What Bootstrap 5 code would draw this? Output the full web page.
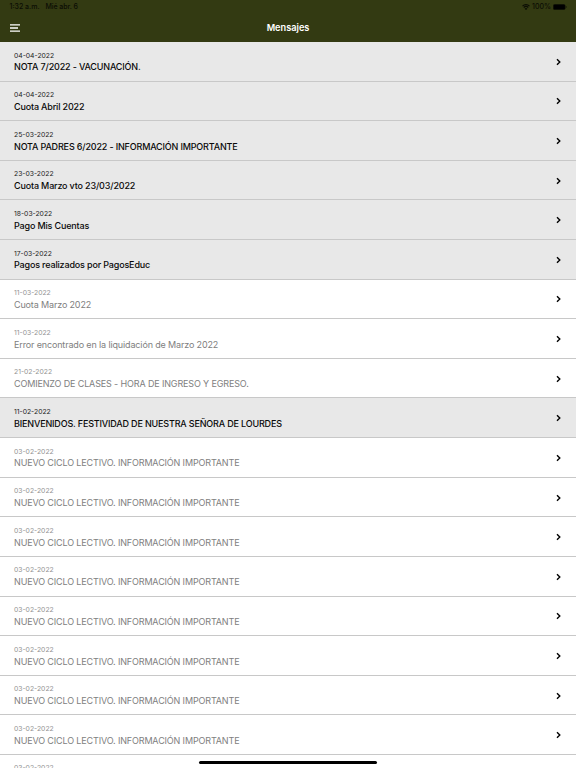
<!DOCTYPE html>
<html lang="es">
<head>
<meta charset="utf-8">
<meta name="viewport" content="width=device-width, initial-scale=1">
<title>Mensajes</title>
<link href="https://cdn.jsdelivr.net/npm/bootstrap@5.3.0/dist/css/bootstrap.min.css" rel="stylesheet">
<style>
body{font-family:Inter,"Liberation Sans",sans-serif;height:768px;background:#fff;color:#000}
.topbar{background:#333a12;height:42px}
.status{height:14px;padding:0 9px 0 9.5px;font-size:7px;line-height:14px;font-weight:500;color:#0b0d04}
.status .clock{gap:6px}
.status .day{letter-spacing:-.08px}
.status .power{gap:2px}
.titlebar{height:28px;padding:0 10px}
.titlebar h1{font-size:9.2px;line-height:28px;font-weight:600;color:#fff}
.side{width:40px}
.msg{height:39.62px;padding:0 14px;border:0;border-bottom:1px solid #c8c8c8;border-radius:0;color:#808080;background:#fff}
.msg.unread{background:#e8e8e8;color:#0a0a0a}
.msg time{font-size:6.8px;line-height:10px;margin-top:8.5px;color:#939393}
.msg.unread time{color:#1c1c1c}
.msg .subject{font-size:9px;line-height:12px;margin-top:.9px;letter-spacing:-.14px}
.msg.unread .subject{font-weight:500;letter-spacing:-.165px}
.chev{width:7px;height:8px;margin-top:1px;stroke:#000;fill:none;stroke-width:1.4}
.home{left:199px;bottom:4.5px;width:178px;height:3px;border-radius:2px;background:#000}
</style>
<script src="https://cdn.jsdelivr.net/npm/bootstrap@5.3.0/dist/js/bootstrap.bundle.min.js"></script>
</head>
<body class="overflow-hidden position-relative">
<svg class="d-none"><symbol id="chevron" viewBox="0 0 7 8"><path d="M2 1.2 4.8 4 2 6.8"/></symbol></svg>
<header class="topbar">
  <div class="status d-flex justify-content-between">
    <div class="d-flex clock"><span>1:32 a.m.</span><span class="day">Mié abr. 6</span></div>
    <div class="d-flex align-items-center power">
      <svg width="8" height="6" viewBox="0 0 16 12" fill="none" stroke="#0b0d04" stroke-width="2.4"><path d="M1 4.2a10 10 0 0 1 14 0M3.5 7a6.4 6.4 0 0 1 9 0"/><path d="M8 12 5.2 9.3a4 4 0 0 1 5.6 0z" fill="#0b0d04" stroke="none"/></svg>
      <span>100%</span>
      <svg width="14" height="6" viewBox="0 0 14 6"><rect x=".25" y=".25" width="12" height="5.5" rx="1.6" fill="#000" stroke="#1a1e0a" stroke-width=".5"/><path d="M12.9 2v2q.7-.3.7-1t-.7-1" fill="#0b0d04"/></svg>
    </div>
  </div>
  <div class="titlebar d-flex align-items-center justify-content-between">
    <div class="side d-flex"><svg width="10" height="8" viewBox="0 0 10 8" stroke="#fff" stroke-width="1.3"><path d="M0 .9h10M0 4h8M0 7.1h10"/></svg></div>
    <h1 class="m-0">Mensajes</h1>
    <div class="side"></div>
  </div>
</header>
<main class="list-group rounded-0">
  <div class="list-group-item msg unread d-flex align-items-center justify-content-between"><div class="d-flex flex-column h-100"><time>04-04-2022</time><span class="subject">NOTA 7/2022 - VACUNACIÓN.</span></div><svg class="chev"><use href="#chevron"/></svg></div>
  <div class="list-group-item msg unread d-flex align-items-center justify-content-between"><div class="d-flex flex-column h-100"><time>04-04-2022</time><span class="subject">Cuota Abril 2022</span></div><svg class="chev"><use href="#chevron"/></svg></div>
  <div class="list-group-item msg unread d-flex align-items-center justify-content-between"><div class="d-flex flex-column h-100"><time>25-03-2022</time><span class="subject">NOTA PADRES 6/2022 - INFORMACIÓN IMPORTANTE</span></div><svg class="chev"><use href="#chevron"/></svg></div>
  <div class="list-group-item msg unread d-flex align-items-center justify-content-between"><div class="d-flex flex-column h-100"><time>23-03-2022</time><span class="subject">Cuota Marzo vto 23/03/2022</span></div><svg class="chev"><use href="#chevron"/></svg></div>
  <div class="list-group-item msg unread d-flex align-items-center justify-content-between"><div class="d-flex flex-column h-100"><time>18-03-2022</time><span class="subject">Pago Mis Cuentas</span></div><svg class="chev"><use href="#chevron"/></svg></div>
  <div class="list-group-item msg unread d-flex align-items-center justify-content-between"><div class="d-flex flex-column h-100"><time>17-03-2022</time><span class="subject">Pagos realizados por PagosEduc</span></div><svg class="chev"><use href="#chevron"/></svg></div>
  <div class="list-group-item msg d-flex align-items-center justify-content-between"><div class="d-flex flex-column h-100"><time>11-03-2022</time><span class="subject">Cuota Marzo 2022</span></div><svg class="chev"><use href="#chevron"/></svg></div>
  <div class="list-group-item msg d-flex align-items-center justify-content-between"><div class="d-flex flex-column h-100"><time>11-03-2022</time><span class="subject">Error encontrado en la liquidación de Marzo 2022</span></div><svg class="chev"><use href="#chevron"/></svg></div>
  <div class="list-group-item msg d-flex align-items-center justify-content-between"><div class="d-flex flex-column h-100"><time>21-02-2022</time><span class="subject">COMIENZO DE CLASES - HORA DE INGRESO Y EGRESO.</span></div><svg class="chev"><use href="#chevron"/></svg></div>
  <div class="list-group-item msg unread d-flex align-items-center justify-content-between"><div class="d-flex flex-column h-100"><time>11-02-2022</time><span class="subject">BIENVENIDOS. FESTIVIDAD DE NUESTRA SEÑORA DE LOURDES</span></div><svg class="chev"><use href="#chevron"/></svg></div>
  <div class="list-group-item msg d-flex align-items-center justify-content-between"><div class="d-flex flex-column h-100"><time>03-02-2022</time><span class="subject">NUEVO CICLO LECTIVO. INFORMACIÓN IMPORTANTE</span></div><svg class="chev"><use href="#chevron"/></svg></div>
  <div class="list-group-item msg d-flex align-items-center justify-content-between"><div class="d-flex flex-column h-100"><time>03-02-2022</time><span class="subject">NUEVO CICLO LECTIVO. INFORMACIÓN IMPORTANTE</span></div><svg class="chev"><use href="#chevron"/></svg></div>
  <div class="list-group-item msg d-flex align-items-center justify-content-between"><div class="d-flex flex-column h-100"><time>03-02-2022</time><span class="subject">NUEVO CICLO LECTIVO. INFORMACIÓN IMPORTANTE</span></div><svg class="chev"><use href="#chevron"/></svg></div>
  <div class="list-group-item msg d-flex align-items-center justify-content-between"><div class="d-flex flex-column h-100"><time>03-02-2022</time><span class="subject">NUEVO CICLO LECTIVO. INFORMACIÓN IMPORTANTE</span></div><svg class="chev"><use href="#chevron"/></svg></div>
  <div class="list-group-item msg d-flex align-items-center justify-content-between"><div class="d-flex flex-column h-100"><time>03-02-2022</time><span class="subject">NUEVO CICLO LECTIVO. INFORMACIÓN IMPORTANTE</span></div><svg class="chev"><use href="#chevron"/></svg></div>
  <div class="list-group-item msg d-flex align-items-center justify-content-between"><div class="d-flex flex-column h-100"><time>03-02-2022</time><span class="subject">NUEVO CICLO LECTIVO. INFORMACIÓN IMPORTANTE</span></div><svg class="chev"><use href="#chevron"/></svg></div>
  <div class="list-group-item msg d-flex align-items-center justify-content-between"><div class="d-flex flex-column h-100"><time>03-02-2022</time><span class="subject">NUEVO CICLO LECTIVO. INFORMACIÓN IMPORTANTE</span></div><svg class="chev"><use href="#chevron"/></svg></div>
  <div class="list-group-item msg d-flex align-items-center justify-content-between"><div class="d-flex flex-column h-100"><time>03-02-2022</time><span class="subject">NUEVO CICLO LECTIVO. INFORMACIÓN IMPORTANTE</span></div><svg class="chev"><use href="#chevron"/></svg></div>
  <div class="list-group-item msg d-flex align-items-center justify-content-between"><div class="d-flex flex-column h-100"><time>03-02-2022</time></div></div>
</main>
<div class="home position-absolute"></div>
</body>
</html>
